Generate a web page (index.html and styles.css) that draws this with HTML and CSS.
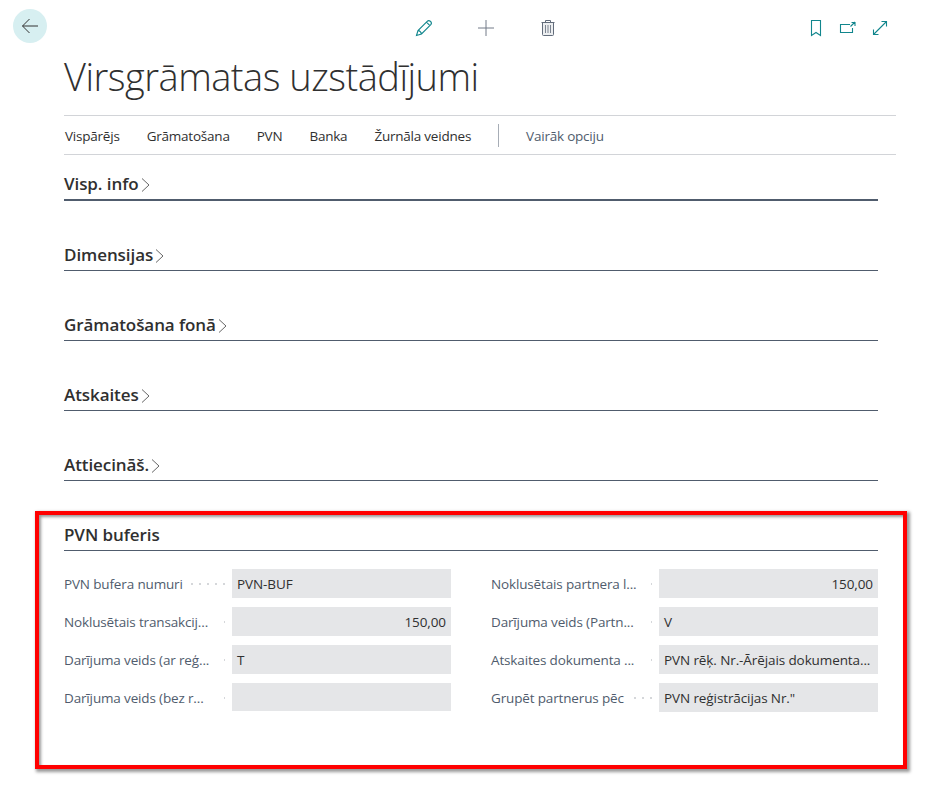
FILE: index.html
```html
<!DOCTYPE html>
<html lang="lv">
<head>
<meta charset="utf-8">
<title>Virsgrāmatas uzstādījumi</title>
<link rel="stylesheet" href="styles.css">
</head>
<body>
<header class="topbar">
  <button class="back" aria-label="Atpakaļ"><svg width="18" height="16" viewBox="0 0 18 16"><path d="M17 8H1.5M8.5 1L1.5 8l7 7"/></svg></button>
  <div class="actions">
    <svg class="teal" width="18" height="18" viewBox="0 0 18 18"><path d="M1.5 16.5L3 11.5 12.2 2.3Q13.6.9 15.3 2.2Q17.3 4 15.8 5.7L6.5 15ZM3 11.5Q5.8 11.8 6.5 15M11.4 3.2L14.9 6.7"/></svg>
    <svg class="gray plus" width="18" height="18" viewBox="0 0 18 18"><path d="M9 1v16M1 9h16"/></svg>
    <svg class="gray" width="18" height="18" viewBox="0 0 18 18"><path class="tint" d="M4 3.5h10v13H4z"/><path d="M2.500 3.500h13M6.500 3.500v-2h5v2M3.500 3.500v12q0 1 1 1h9q1 0 1-1v-12"/><path class="slats" d="M6.500 6v8M9 6v8M11.500 6v8"/></svg>
  </div>
  <div class="tools">
    <svg class="teal" width="18" height="18" viewBox="0 0 18 18"><path d="M4.5 1.5h9v15L9 13.5l-4.500 3z"/></svg>
    <svg class="teal" width="18" height="18" viewBox="0 0 18 18"><path d="M11 5.500H1.500v8h12V9M11.500 7.500l4.500-4.500M12.500 3.500h3.500v3.500"/></svg>
    <svg class="teal" width="18" height="18" viewBox="0 0 18 18"><path d="M2.500 15.500l13-13M10.500 2.500h5v5M2.500 10.500v5h5"/></svg>
  </div>
</header>
<main class="page">
  <h1 class="title">Virsgrāmatas uzstādījumi</h1>
  <nav class="menu">
    <a>Vispārējs</a><a>Grāmatošana</a><a>PVN</a><a>Banka</a><a>Žurnāla veidnes</a>
    <i class="divider"></i><a class="more">Vairāk opciju</a>
  </nav>
  <section class="tab first"><h2>Visp. info</h2><svg class="chev" viewBox="0 0 9 14"><path d="M1 .5L8 7l-7 6.500"/></svg></section>
  <section class="tab"><h2>Dimensijas</h2><svg class="chev" viewBox="0 0 9 14"><path d="M1 .5L8 7l-7 6.500"/></svg></section>
  <section class="tab"><h2>Grāmatošana fonā</h2><svg class="chev" viewBox="0 0 9 14"><path d="M1 .5L8 7l-7 6.500"/></svg></section>
  <section class="tab"><h2>Atskaites</h2><svg class="chev" viewBox="0 0 9 14"><path d="M1 .5L8 7l-7 6.500"/></svg></section>
  <section class="tab"><h2>Attiecināš.</h2><svg class="chev" viewBox="0 0 9 14"><path d="M1 .5L8 7l-7 6.500"/></svg></section>
  <section class="highlight">
    <div class="tab open"><h2>PVN buferis</h2></div>
    <div class="fields">
      <div class="field"><label>PVN bufera numuri</label><i class="dots d5"></i><output>PVN-BUF</output></div>
      <div class="field"><label>Noklusētais partnera l...</label><i class="dots"></i><output class="num">150,00</output></div>
      <div class="field"><label>Noklusētais transakcij...</label><i class="dots"></i><output class="num">150,00</output></div>
      <div class="field"><label>Darījuma veids (Partn...</label><i class="dots"></i><output>V</output></div>
      <div class="field"><label>Darījuma veids (ar reģ...</label><i class="dots"></i><output>T</output></div>
      <div class="field"><label>Atskaites dokumenta ...</label><i class="dots"></i><output>PVN rēķ. Nr.-Ārējais dokumenta...</output></div>
      <div class="field"><label>Darījuma veids (bez r...</label><i class="dots"></i><output class="short"></output></div>
      <div class="field"><label>Grupēt partnerus pēc</label><i class="dots d3"></i><output>PVN reģistrācijas Nr."</output></div>
    </div>
  </section>
</main>
</body>
</html>
```
FILE: styles.css
```css
* { box-sizing: border-box; }
body { margin: 0; min-height: 803px; background: #fff; color: #303030; font: 13.5px/18px "Open Sans", "Noto Sans", sans-serif; letter-spacing: -0.15px; }
svg { display: block; fill: none; stroke-width: 1; overflow: visible; }
.topbar { height: 56px; display: grid; grid-template-columns: 415px 1fr auto; padding: 9px 55px 0 0; }
.back { width: 34px; height: 34px; margin-left: 13px; border: 0; border-radius: 50%; background: #d7eff1; display: flex; align-items: center; justify-content: center; padding: 0; }
.back svg { stroke: #333; }
.actions { display: flex; gap: 44px; padding-top: 10px; }
.tools { display: flex; gap: 14px; padding-top: 10px; }
.teal { stroke: #11868d; stroke-width: 1.1; }
.gray { stroke: #626c7b; }
.plus { stroke: #737b88; }
.tint { fill: #eceef0; stroke: none; }
.actions svg:last-child { margin-left: -0.5px; }
.slats { stroke: #7c8490; }
.page { margin: 0 48px 0 64px; }
.title { margin: 0; height: 59px; font-size: 38px; line-height: 40px; font-weight: 300; letter-spacing: -0.5px; white-space: nowrap; }
.menu { width: 832px; height: 40px; border: solid #d2d4d8; border-width: 1px 0; display: flex; align-items: center; gap: 27px; padding-left: 1px; white-space: nowrap; letter-spacing: -0.22px; }
.menu a { padding-top: 2px; }
.divider { width: 1px; height: 23px; background: #a7adb6; }
.more { color: #505c6d; }
.tab { width: 814px; height: 70px; padding-top: 38px; border-bottom: 1px solid #505c6d; display: flex; align-items: center; gap: 4px; }
.first { height: 46px; padding-top: 13px; border-bottom-width: 2px; }
h2 { margin: 0; font-size: 17px; line-height: 24px; font-weight: 550; letter-spacing: -0.08px; white-space: nowrap; }
.chev { width: 9px; height: 14px; stroke: #666; margin: 2px 0 0 -2px; }
.highlight { width: 872px; height: 258px; margin: 30px 0 0 -29px; border: 4px solid #f00; padding: 0 25px; box-shadow: 2px 2px 3px 1px #999, inset 2px 2px 3px #999; }
.open { height: 36px; padding-top: 4px; }
.fields { width: 814px; display: grid; grid-template-columns: 387px 387px; gap: 9px 40px; padding-top: 18px; }
.field { display: flex; align-items: center; height: 29px; }
.field label { flex: 1; color: #505c6d; white-space: nowrap; }
.dots { width: 2px; height: 2px; margin-right: 7px; background: repeating-linear-gradient(to left, #d5d7da 0 1px, transparent 1px 8px); }
.d5 { width: 34px; background: repeating-linear-gradient(to left, #d5d7da 0 2px, transparent 2px 8px); }
.d3 { width: 18px; background: repeating-linear-gradient(to left, #d5d7da 0 2px, transparent 2px 8px); }
output { width: 219px; height: 29px; padding: 1px 5px 0 5px; line-height: 28px; background: #e5e6e8; white-space: nowrap; letter-spacing: -0.1px; }
.num { text-align: right; }
.short { height: 28px; align-self: flex-start; }
```
